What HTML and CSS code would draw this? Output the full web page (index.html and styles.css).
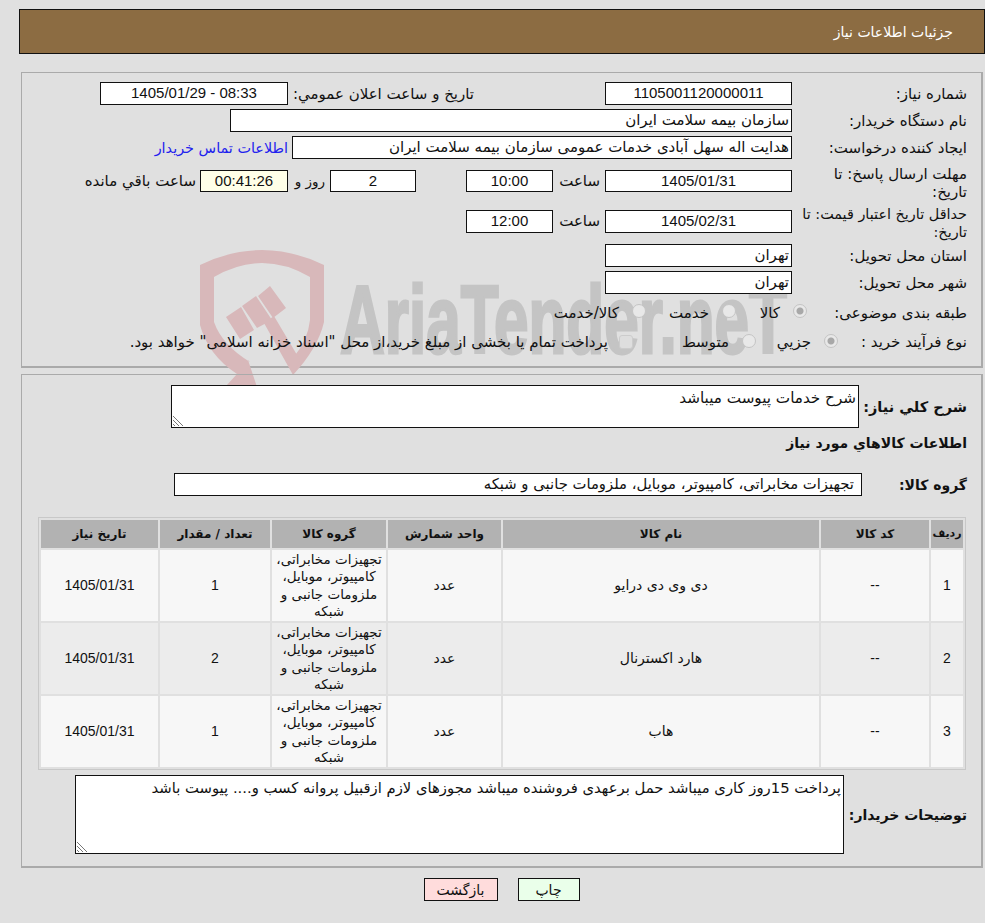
FILE: index.html
```html
<!DOCTYPE html>
<html lang="fa" dir="rtl">
<head>
<meta charset="utf-8">
<title>جزئیات اطلاعات نیاز</title>
<link rel="stylesheet" href="styles.css">
</head>
<body>
<header class="title-bar">جزئیات اطلاعات نیاز</header>

<section class="panel panel-info">
  <svg class="watermark" viewBox="0 0 620 150" aria-hidden="true">
    <path class="wm-shield" d="M10 25 Q72 -5 134 25 L134 82 Q128 108 103 135 L103 118 Q118 100 120 80 L120 37 Q72 9 24 37 L24 82 Q32 105 60 122 L58 120 L67 147 L36 146 L47 134 Q18 115 10 85 Z"/>
    <path class="wm-shield" d="M36 77 L51 67 L64 90 L50 99 Z M52 66 L66 56 L82 80 L67 88 Z M68 56 L80 46 L96 68 L83 78 Z M74 83 L84 76 L110 120 L103 135 Z"/>
    <text class="wm-text" x="150" y="113" textLength="447" lengthAdjust="spacingAndGlyphs">AriaTender.neT</text>
  </svg>

  <div class="row row-a">
    <div class="label">شماره نیاز:</div>
    <div class="box col-date center num">1105001120000011</div>
    <div class="label-mid">تاریخ و ساعت اعلان عمومي:</div>
    <div class="box col-pub center num ltr">1405/01/29 - 08:33</div>
  </div>
  <div class="row row-b">
    <div class="label">نام دستگاه خریدار:</div>
    <div class="box col-org">سازمان بیمه سلامت ایران</div>
  </div>
  <div class="row row-b">
    <div class="label">ایجاد کننده درخواست:</div>
    <div class="box col-creator">هدایت اله سهل آبادی خدمات عمومی سازمان بیمه سلامت ایران</div>
    <a class="contact" href="#">اطلاعات تماس خریدار</a>
  </div>
  <div class="row row-deadline">
    <div class="label">مهلت ارسال پاسخ: تا تاریخ:</div>
    <div class="box col-date center num">1405/01/31</div>
    <div class="hour">ساعت</div>
    <div class="box col-time center num">10:00</div>
    <div class="box col-day center num">2</div>
    <div class="days">روز و</div>
    <div class="box col-left center num">00:41:26</div>
    <div class="remain">ساعت باقي مانده</div>
  </div>
  <div class="row row-valid">
    <div class="label">حداقل تاریخ اعتبار قیمت: تا تاریخ:</div>
    <div class="box col-date center num">1405/02/31</div>
    <div class="hour">ساعت</div>
    <div class="box col-time center num">12:00</div>
  </div>
  <div class="row row-b">
    <div class="label">استان محل تحویل:</div>
    <div class="box col-date">تهران</div>
  </div>
  <div class="row row-b">
    <div class="label">شهر محل تحویل:</div>
    <div class="box col-date">تهران</div>
  </div>
  <div class="row row-radio">
    <div class="label">طبقه بندی موضوعی:</div>
    <span class="radio on"></span><span class="opt opt-kala">کالا</span>
    <span class="radio"></span><span class="opt opt-service">خدمت</span>
    <span class="radio"></span><span class="opt">کالا/خدمت</span>
  </div>
  <div class="row row-radio row-process">
    <div class="label">نوع فرآیند خرید :</div>
    <span class="radio on"></span><span class="opt opt-small">جزیي</span>
    <span class="radio"></span><span class="opt opt-mid">متوسط</span>
    <span class="radio square"></span><span class="opt">پرداخت تمام یا بخشی از مبلغ خرید،از محل "اسناد خزانه اسلامی" خواهد بود.</span>
  </div>
</section>

<section class="panel panel-goods">
  <div class="row row-desc">
    <div class="label-bold">شرح کلي نياز:</div>
    <div class="area area-desc">شرح خدمات پیوست میباشد<svg class="grip" viewBox="0 0 10 10" aria-hidden="true"><path d="M0 0 L10 10 M0 4 L6 10 M0 8 L2 10" stroke="#777" fill="none"/></svg></div>
  </div>
  <h2 class="goods-title">اطلاعات کالاهاي مورد نياز</h2>
  <div class="row row-group">
    <div class="label-bold group-label">گروه کالا:</div>
    <div class="box group-box">تجهیزات مخابراتی، کامپیوتر، موبایل، ملزومات جانبی و شبکه</div>
  </div>
  <table class="goods">
    <colgroup>
      <col class="c1"><col class="c2"><col class="c3"><col class="c4"><col class="c5"><col class="c6"><col class="c7">
    </colgroup>
    <thead>
      <tr><th>ردیف</th><th>کد کالا</th><th>نام کالا</th><th>واحد شمارش</th><th>گروه کالا</th><th>تعداد / مقدار</th><th>تاریخ نیاز</th></tr>
    </thead>
    <tbody>
      <tr><td class="num">1</td><td class="num">--</td><td>دی وی دی درایو</td><td>عدد</td><td class="grp">تجهیزات مخابراتی، کامپیوتر، موبایل، ملزومات جانبی و شبکه</td><td class="num">1</td><td class="num">1405/01/31</td></tr>
      <tr><td class="num">2</td><td class="num">--</td><td>هارد اکسترنال</td><td>عدد</td><td class="grp">تجهیزات مخابراتی، کامپیوتر، موبایل، ملزومات جانبی و شبکه</td><td class="num">2</td><td class="num">1405/01/31</td></tr>
      <tr><td class="num">3</td><td class="num">--</td><td>هاب</td><td>عدد</td><td class="grp">تجهیزات مخابراتی، کامپیوتر، موبایل، ملزومات جانبی و شبکه</td><td class="num">1</td><td class="num">1405/01/31</td></tr>
    </tbody>
  </table>
  <div class="row row-notes">
    <div class="label-bold">توضیحات خریدار:</div>
    <div class="area area-notes">پرداخت 15روز کاری میباشد حمل برعهدی فروشنده میباشد مجوزهای لازم ازقبیل پروانه کسب و.... پیوست باشد<svg class="grip" viewBox="0 0 10 10" aria-hidden="true"><path d="M0 0 L10 10 M0 4 L6 10 M0 8 L2 10" stroke="#777" fill="none"/></svg></div>
  </div>
</section>

<div class="actions">
  <button class="btn btn-print" type="button">چاپ</button>
  <button class="btn btn-back" type="button">بازگشت</button>
</div>
</body>
</html>
```
FILE: styles.css
```css
* { box-sizing: border-box; }
html, body { margin: 0; }
body {
  width: 985px;
  height: 923px;
  overflow: hidden;
  background: #e0e0e0;
  color: #111;
  font: 15px/18px "DejaVu Sans", "Liberation Sans", sans-serif;
  padding-top: 9px;
}
.num { font-family: "Liberation Sans", "DejaVu Sans", sans-serif; font-size: 15px; }
.ltr { direction: ltr; }
.title-bar {
  height: 45px;
  margin: 0 0 0 19px;
  width: 966px;
  background: #8c6c42;
  border: 1px solid #111;
  color: #fff;
  font-size: 14px;
  padding: 13px 31px 0 0;
}
.panel {
  position: relative;
  margin-right: 2px;
  width: 962px;
  border: 1px solid #aaa;
  border-bottom-width: 2px;
  border-right-width: 2px;
  padding-right: 14px;
}
.panel-info { margin-top: 18px; height: 296px; padding-top: 9px; }
.panel-goods { margin-top: 6px; height: 494px; padding-top: 10px; }
.watermark { position: absolute; left: 168px; top: 167px; width: 620px; height: 150px; z-index: 0; pointer-events: none; }
.wm-shield { fill: #d8b8ba; }
.wm-text { font: 700 97px "Liberation Sans", sans-serif; fill: #c4c4c4; stroke: #c4c4c4; stroke-width: 3px; direction: ltr; }
.row { position: relative; z-index: 1; display: flex; align-items: center; }
.row-a { height: 23px; margin-bottom: 4px; }
.row-b { height: 23px; margin-bottom: 4px; }
.label { width: 175px; flex: none; line-height: 18px; padding-left: 6px; }
.label-mid { width: 317px; padding-right: 131px; white-space: nowrap; flex: none; }
.box {
  height: 23px;
  flex: none;
  background: #fff;
  border: 1px solid #111;
  padding: 0 2px;
  line-height: 20px;
  white-space: nowrap;
  overflow: hidden;
}
.center { text-align: center; }
.col-date { width: 187px; }
.col-pub { width: 188px; }
.col-org { width: 562px; }
.col-creator { width: 500px; }
.contact { color: #22e; font-size: 14.4px; text-decoration: none; margin-right: 4px; white-space: nowrap; }
.row-deadline { margin-top: 11px; height: 36px; align-items: flex-start; }
.row-deadline .box { height: 22px; }
.row-deadline .label, .row-valid .label { margin-top: -5px; }
.row-valid { height: 34px; align-items: flex-start; margin-top: 4px; }
.row-valid .label { font-size: 14.4px; padding-left: 0; }
.hour { width: 52px; padding-right: 5px; line-height: 22px; flex: none; }
.col-time { width: 87px; }
.col-day { width: 86px; margin-right: 50px; }
.days { width: 42px; padding-right: 5px; font-size: 13.5px; line-height: 22px; flex: none; white-space: nowrap; }
.col-left { width: 88px; background: #ffffe8; }
.remain { padding-right: 4px; line-height: 22px; white-space: nowrap; }
.row-radio { height: 30px; }
.row-radio .label { width: 160px; padding-left: 0; white-space: nowrap; }
.row-process { margin-top: -1px; }
.row-process .label { width: 129px; }
.radio {
  width: 14px; height: 14px; flex: none;
  border: 1px solid #c4c4c4; border-radius: 50%; background: #e8e8e8;
  margin: -4px 0 0 13px;
}
.row-process .radio { margin-top: -2px; }
.radio.on { background: radial-gradient(circle, #a8a8a8 0 3px, #e8e8e8 4px); }
.row-process .radio.square { border-radius: 3px; background: #dedede; border-color: #ccc; margin-left: 11px; margin-top: 0; }
.opt { white-space: nowrap; flex: none; }
.opt-kala { width: 44px; }
.opt-service { width: 63px; }
.opt-small { width: 55px; }
.opt-mid { width: 96px; }
.label-bold { font-weight: 700; font-size: 14px; white-space: nowrap; flex: none; }
.row-desc { height: 43px; }
.row-desc .label-bold { width: 108px; font-size: 14.5px; }
.area { position: relative; background: #fff; border: 1px solid #111; padding: 3px 2px; flex: none; }
.area-desc { width: 688px; height: 43px; font-size: 15.2px; }
.area-notes { width: 769px; height: 79px; font-size: 14.8px; }
.grip { position: absolute; left: 1px; bottom: 1px; width: 10px; height: 10px; }
.goods-title { position: relative; z-index: 1; margin: 6px 0 0; font-size: 14px; line-height: 18px; height: 39px; font-weight: 700; }
.row-group { height: 23px; }
.group-label { width: 105px; }
.group-box { width: 688px; padding-right: 7px; font-size: 14.8px; }
.goods {
  margin: 21px 1px 0 0;
  width: 928px;
  border-collapse: separate;
  border-spacing: 2px;
  border: 1px solid #c8c8c8;
  table-layout: fixed;
  position: relative;
  z-index: 1;
}
.c1 { width: 32px; } .c2 { width: 108px; } .c3 { width: 316px; } .c4 { width: 113px; }
.c5 { width: 114px; } .c6 { width: 110px; } .c7 { width: 117px; }
.goods th { height: 28px; padding: 0; background: #b2b2b2; font-size: 12px; font-weight: 700; text-align: center; }
.goods th:first-child { font-size: 11px; }
.goods td { height: 71px; padding: 0 2px; text-align: center; line-height: 17.5px; font-size: 14px; }
.goods td.num { font-size: 14px; }
.goods td.grp { font-size: 13.5px; }
.goods tbody tr:nth-child(odd) td { background: #f7f7f7; }
.goods tbody tr:nth-child(even) td { background: #ececec; }
.row-notes { margin-top: 5px; height: 79px; }
.row-notes .label-bold { width: 123px; }
.actions { display: flex; justify-content: center; gap: 20px; margin: 10px 0 0 18px; }
.btn { height: 23px; border: 1px solid #111; font: 14px/18px "DejaVu Sans", sans-serif; color: #111; padding: 0; }
.btn-back { width: 74px; background: #ffdcdc; }
.btn-print { width: 62px; background: #eaffea; }
```
